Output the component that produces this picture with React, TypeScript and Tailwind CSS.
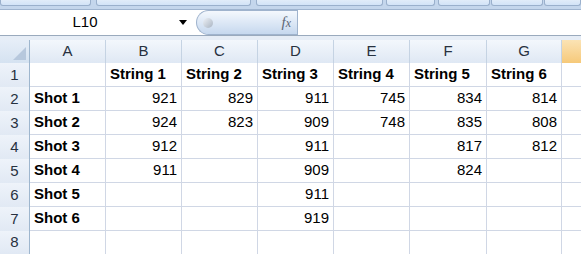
import React from 'react';

const cols = ['A', 'B', 'C', 'D', 'E', 'F', 'G'];

// rows of the sheet, first cell is column A
const rows: string[][] = [
  ['', 'String 1', 'String 2', 'String 3', 'String 4', 'String 5', 'String 6'],
  ['Shot 1', '921', '829', '911', '745', '834', '814'],
  ['Shot 2', '924', '823', '909', '748', '835', '808'],
  ['Shot 3', '912', '', '911', '', '817', '812'],
  ['Shot 4', '911', '', '909', '', '824', ''],
  ['Shot 5', '', '', '911', '', '', ''],
  ['Shot 6', '', '', '919', '', '', ''],
  ['', '', '', '', '', '', ''],
];

const gridCols = 'grid grid-cols-[30px_76px_76px_76px_76px_76px_77px_75px_1fr]';

const RibbonStrip = () => (
  <div className="flex h-[10px] bg-[#c4d6ec] border-b border-[#9fb4cf]">
    {[
      'w-[91px]',
      'ml-[5px] w-[155px]',
      'ml-[5px] w-[127px]',
      'ml-[3px] w-[49px]',
      'ml-[3px] w-[52px]',
      'ml-[1px] w-[52px]',
      'ml-[1px] flex-1',
    ].map((w, i) => (
      <div
        key={i}
        className={`${w} h-[6px] rounded-b-[3px] border border-t-0 border-[#9ab0cc] bg-gradient-to-b from-[#e1ecf9] to-[#d2e3f7]`}
      />
    ))}
  </div>
);

const FormulaBar = () => (
  <div className="flex h-[26px] bg-white border-b border-[#9aaabd]">
    <div className="relative w-[196px] flex items-center">
      <span className="w-[170px] text-center text-[15px] text-black">L10</span>
      <span className="absolute left-[179px] top-[10px] w-0 h-0 border-x-[4px] border-x-transparent border-t-[5px] border-t-black" />
    </div>
    <div className="w-[101px] h-[25px] rounded-l-[13px] border border-r-0 border-[#9fb3cd] bg-gradient-to-b from-[#f4f8fd] via-[#dde8f6] to-[#c6d8ee] flex items-center px-[6px]">
      <span className="w-[10px] h-[10px] rounded-full bg-gradient-to-br from-[#eef2f7] to-[#a9b4c2]" />
      <span className="ml-auto text-[15px] italic text-[#5c6676] font-['Liberation_Serif',serif]">
        f<span className="text-[12px]">x</span>
      </span>
    </div>
    <div className="flex-1 border-l border-[#9fb3cd]" />
  </div>
);

export default function App() {
  return (
    <div className="w-[581px] h-[254px] overflow-hidden bg-white font-['Liberation_Sans',Arial,sans-serif]">
      <RibbonStrip />
      <FormulaBar />
      <div className="h-[4px] bg-[#e6edf6]" />

      {/* column headers */}
      <div className={`${gridCols} h-[23px] border-b border-[#9eb6ce]`}>
        <div className="relative bg-gradient-to-b from-[#e6eef8] to-[#d5e2f1] border-r border-[#9eb6ce]">
          <span className="absolute right-[3px] bottom-[3px] w-0 h-0 border-l-[13px] border-l-transparent border-b-[13px] border-b-[#b7c8dd]" />
        </div>
        {cols.map((c) => (
          <div
            key={c}
            className="flex items-center justify-center bg-gradient-to-b from-[#f3f7fc] to-[#dfe8f4] border-r border-[#c5d3e3] text-[15px] text-[#27313f]"
          >
            {c}
          </div>
        ))}
        <div className="bg-gradient-to-b from-[#fbe3b4] to-[#f6c979]" />
      </div>

      {/* sheet rows */}
      {rows.map((row, r) => (
        <div key={r} className={`${gridCols} h-[24px] border-b border-[#d0d7e5]`}>
          <div className="flex items-center justify-center bg-gradient-to-b from-[#eef3fa] to-[#e1e9f4] border-r border-[#9eb6ce] border-b border-b-[#c5d3e3] -mb-px text-[15px] text-[#27313f]">
            {r + 1}
          </div>
          {row.map((v, i) => {
            const num = /^\d+$/.test(v);
            return (
              <div
                key={i}
                className={`flex items-end pb-[1px] px-[4px] border-r border-[#d0d7e5] text-[15px] text-black ${
                  num ? 'justify-end' : 'font-bold'
                }`}
              >
                {v}
              </div>
            );
          })}
          <div />
        </div>
      ))}
    </div>
  );
}
